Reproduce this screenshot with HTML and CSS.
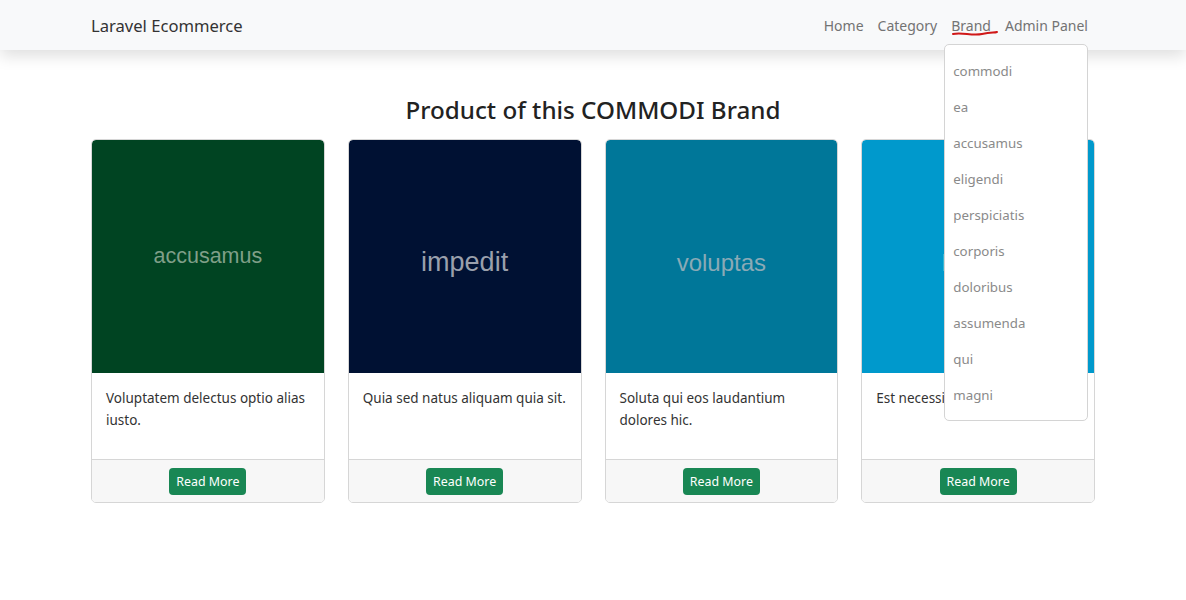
FILE: index.html
```html
<!DOCTYPE html>
<html lang="en">
<head>
<meta charset="utf-8">
<title>Laravel Ecommerce</title>
<link rel="stylesheet" href="styles.css">
</head>
<body>
<nav class="navbar">
  <a class="brand" href="#">Laravel Ecommerce</a>
  <ul class="nav-links">
    <li><a href="#">Home</a></li>
    <li><a href="#">Category</a></li>
    <li class="dropdown-wrap">
      <a href="#" class="active-brand">Brand</a>
      <svg class="scribble" width="46" height="8" viewBox="0 0 46 8"><path d="M1 4 C 10 2, 20 6, 30 4 S 42 3, 45 2" stroke="#d01818" stroke-width="2" fill="none" stroke-linecap="round"/></svg>
      <ul class="dropdown">
        <li>commodi</li>
        <li>ea</li>
        <li>accusamus</li>
        <li>eligendi</li>
        <li>perspiciatis</li>
        <li>corporis</li>
        <li>doloribus</li>
        <li>assumenda</li>
        <li>qui</li>
        <li>magni</li>
      </ul>
    </li>
    <li><a href="#">Admin Panel</a></li>
  </ul>
</nav>
<main class="content">
  <h2 class="title">Product of this COMMODI Brand</h2>
  <div class="cards">
    <div class="card">
      <div class="card-img c1"><span class="t1">accusamus</span></div>
      <div class="card-body">Voluptatem delectus optio alias iusto.</div>
      <div class="card-footer"><a class="btn" href="#">Read More</a></div>
    </div>
    <div class="card">
      <div class="card-img c2"><span class="t2">impedit</span></div>
      <div class="card-body">Quia sed natus aliquam quia sit.</div>
      <div class="card-footer"><a class="btn" href="#">Read More</a></div>
    </div>
    <div class="card">
      <div class="card-img c3"><span class="t3">voluptas</span></div>
      <div class="card-body">Soluta qui eos laudantium dolores hic.</div>
      <div class="card-footer"><a class="btn" href="#">Read More</a></div>
    </div>
    <div class="card">
      <div class="card-img c4"><span class="t4">labore</span></div>
      <div class="card-body">Est necessitatibus facere.</div>
      <div class="card-footer"><a class="btn" href="#">Read More</a></div>
    </div>
  </div>
</main>
</body>
</html>
```
FILE: styles.css
```css
* { box-sizing: border-box; }
body {
  margin: 0;
  font-family: "Noto Sans", "Open Sans", sans-serif;
  color: #212529;
  background: #fff;
}
a { text-decoration: none; }
.navbar {
  position: relative;
  z-index: 2;
  height: 50px;
  background: #f8f9fa;
  box-shadow: 0 6px 16px rgba(0,0,0,0.13);
  display: flex;
  align-items: center;
  justify-content: space-between;
  padding: 0 98px 0 91px;
}
.brand {
  font-size: 16.6px;
  color: #333;
}
.nav-links {
  list-style: none;
  margin: 0;
  padding: 0;
  display: flex;
  gap: 14px;
}
.nav-links a {
  font-size: 14px;
  color: #737373;
}
.dropdown-wrap { position: relative; }
.scribble {
  position: absolute;
  left: 1px;
  top: 16px;
}
.dropdown {
  position: absolute;
  left: -7px;
  top: 30px;
  width: 144px;
  margin: 0;
  padding: 8px 0 7px;
  list-style: none;
  background: #fff;
  border: 1px solid #d4d4d4;
  border-radius: 5px;
}
.dropdown li {
  height: 36px;
  line-height: 36px;
  padding-left: 8px;
  font-size: 13.3px;
  color: #8a8a8a;
}
.content {
  padding: 0 91px;
}
.title {
  margin: 0;
  padding: 42px 0 12px;
  text-align: center;
  font-size: 24.2px;
  font-weight: 500;
  line-height: 35px;
  color: #222;
}
.cards {
  display: grid;
  width: 1004px;
  grid-template-columns: repeat(4, 1fr);
  gap: 23px;
}
.card {
  border: 1px solid #d6d6d6;
  border-radius: 5px;
  overflow: hidden;
  display: flex;
  flex-direction: column;
}
.card-img {
  height: 233px;
  border-radius: 4px 4px 0 0;
  display: flex;
  align-items: center;
  justify-content: center;
  font-family: "Liberation Sans", Arial, sans-serif;
}
.c1 { background: #004422; }
.c2 { background: #001133; }
.c3 { background: #007799; }
.c4 { background: #0099cc; }
.t1 { color: #7f9f88; font-size: 21.5px; }
.t2 { color: #9aa0ac; font-size: 27px; margin-top: 12px; }
.t3 { color: #8aaab6; font-size: 24px; margin-top: 12px; }
.t4 { color: #9bc4d4; font-size: 24px; margin-top: 12px; margin-right: 6px; }
.card-body {
  height: 86px;
  padding: 14px 14px;
  font-size: 13.5px;
  line-height: 22px;
  color: #333;
}
.card-footer {
  border-top: 1px solid #d6d6d6;
  background: #f7f7f7;
  height: 43px;
  display: flex;
  align-items: center;
  justify-content: center;
}
.btn {
  background: #198754;
  color: #fff;
  font-size: 12.4px;
  height: 27px;
  line-height: 27px;
  padding: 0 7px;
  border-radius: 4px;
}
```
